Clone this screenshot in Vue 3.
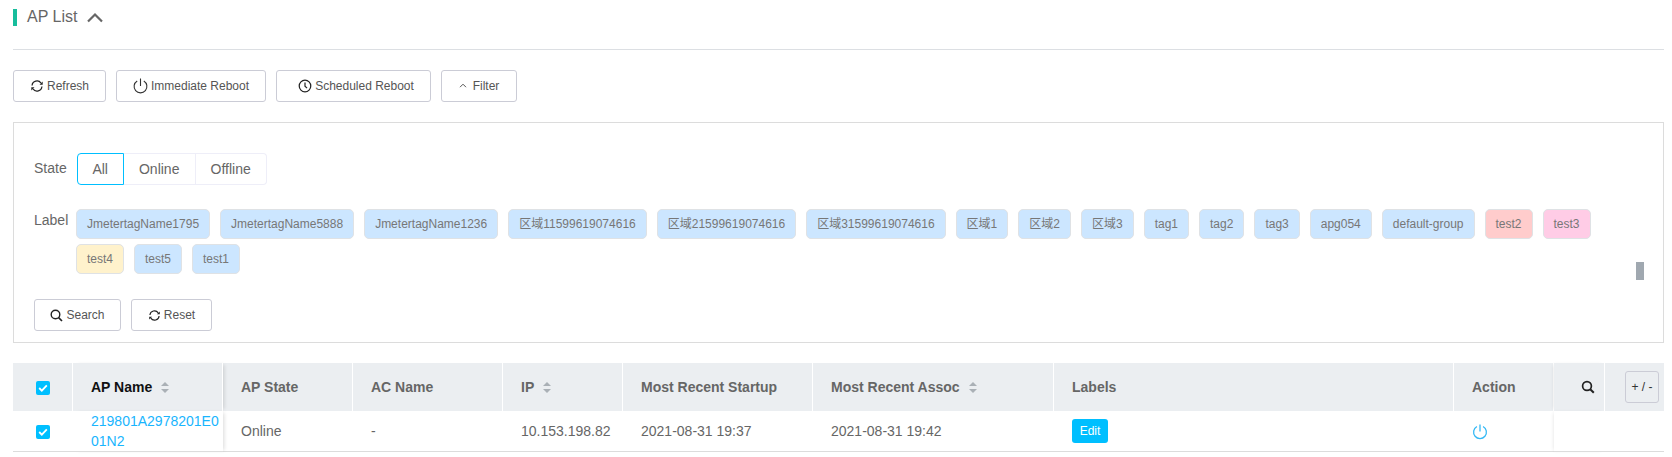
<script setup>
const tags = [
  ['JmetertagName1795', 'blue'], ['JmetertagName5888', 'blue'], ['JmetertagName1236', 'blue'],
  ['区域11599619074616', 'blue'], ['区域21599619074616', 'blue'], ['区域31599619074616', 'blue'],
  ['区域1', 'blue'], ['区域2', 'blue'], ['区域3', 'blue'], ['tag1', 'blue'], ['tag2', 'blue'], ['tag3', 'blue'],
  ['apg054', 'blue'], ['default-group', 'blue'], ['test2', 'red'], ['test3', 'pink'], ['test4', 'yellow'],
  ['test5', 'blue'], ['test1', 'blue']
]
</script>

<template>
  <div class="page">
    <div class="title">
      <span class="bar"></span>
      <span class="title-text">AP List</span>
      <svg class="chev" width="18" height="11" viewBox="0 0 18 11"><path d="M2 9.5 L9 2.5 L16 9.5" fill="none" stroke="#666" stroke-width="2.2"/></svg>
    </div>
    <div class="rule"></div>

    <div class="toolbar">
      <button class="btn w-refresh">
        <svg class="ic" width="14" height="14" viewBox="0 0 15 15"><path d="M2.2 7a5.3 5.3 0 0 1 9.6-2.6M12.8 8a5.3 5.3 0 0 1-9.6 2.6" fill="none" stroke="#222" stroke-width="1.3"/><path d="M13.6 2.8v3.4h-3.4zM1.4 12.2V8.8h3.4z" fill="#222"/></svg>
        Refresh
      </button>
      <button class="btn w-imm">
        <svg class="ic" width="15" height="16" viewBox="0 0 15 16"><path d="M4.2 3a6.4 6.4 0 1 0 6.6 0" fill="none" stroke="#333" stroke-width="1.1"/><path d="M7.5 .5v7.5" stroke="#333" stroke-width="1.1"/></svg>
        Immediate Reboot
      </button>
      <button class="btn w-sch">
        <svg class="ic" width="14" height="14" viewBox="0 0 15 15"><circle cx="7.5" cy="7.5" r="6.2" fill="none" stroke="#222" stroke-width="1.3"/><path d="M7.5 3.8v4l2.2 2" fill="none" stroke="#222" stroke-width="1.3"/></svg>
        Scheduled Reboot
      </button>
      <button class="btn w-fil">
        <svg class="caret" width="8" height="5" viewBox="0 0 8 5"><path d="M1 4.2 L4 1.2 L7 4.2" fill="none" stroke="#555" stroke-width="1"/></svg>
        <span class="fil-text">Filter</span>
      </button>
    </div>

    <div class="filter">
      <div class="state-row">
        <span class="lbl lbl-state">State</span>
        <div class="seg">
          <span class="seg-item seg-all">All</span>
          <span class="seg-item seg-on">Online</span>
          <span class="seg-item seg-off">Offline</span>
        </div>
      </div>
      <div class="label-row">
        <span class="lbl lbl-tags">Label</span>
        <div class="tags">
          <span v-for="t in tags" :key="t[0]" class="tag" :class="t[1]">{{ t[0] }}</span>
        </div>
      </div>
      <div class="filter-actions">
        <button class="btn w-search">
          <svg class="ic" width="13" height="13" viewBox="0 0 13 13"><circle cx="5.5" cy="5.5" r="4.3" fill="none" stroke="#222" stroke-width="1.4"/><path d="M8.6 8.6l3.4 3.4" stroke="#222" stroke-width="1.6"/></svg>
          Search
        </button>
        <button class="btn w-reset">
          <svg class="ic" width="13" height="13" viewBox="0 0 15 15"><path d="M2.2 7a5.3 5.3 0 0 1 9.6-2.6M12.8 8a5.3 5.3 0 0 1-9.6 2.6" fill="none" stroke="#222" stroke-width="1.3"/><path d="M13.6 2.8v3.4h-3.4zM1.4 12.2V8.8h3.4z" fill="#222"/></svg>
          Reset
        </button>
      </div>
      <span class="thumb"></span>
    </div>

    <table class="grid">
      <colgroup>
        <col style="width:60px"><col style="width:150px"><col style="width:130px"><col style="width:150px">
        <col style="width:120px"><col style="width:190px"><col style="width:241px"><col style="width:400px">
        <col style="width:100px"><col style="width:51px"><col style="width:59px">
      </colgroup>
      <thead>
        <tr>
          <th class="center"><span class="check"><svg width="10" height="8" viewBox="0 0 10 8"><path d="M1.2 4l2.6 2.6L8.8 1.4" fill="none" stroke="#fff" stroke-width="1.8"/></svg></span></th>
          <th class="fixed-left dark">AP Name <span class="sort"></span></th>
          <th>AP State</th>
          <th>AC Name</th>
          <th>IP <span class="sort"></span></th>
          <th>Most Recent Startup</th>
          <th>Most Recent Assoc <span class="sort"></span></th>
          <th>Labels</th>
          <th>Action</th>
          <th class="fixed-right th-search">
            <svg width="14" height="14" viewBox="0 0 14 14"><circle cx="6" cy="6" r="4.4" fill="none" stroke="#222" stroke-width="1.7"/><path d="M9.2 9.2l3.6 3.6" stroke="#222" stroke-width="2"/></svg>
          </th>
          <th class="th-plus"><span class="plus">+ / -</span></th>
        </tr>
      </thead>
      <tbody>
        <tr>
          <td class="center"><span class="check"><svg width="10" height="8" viewBox="0 0 10 8"><path d="M1.2 4l2.6 2.6L8.8 1.4" fill="none" stroke="#fff" stroke-width="1.8"/></svg></span></td>
          <td class="fixed-left name"><a class="link">219801A2978201E0<br>01N2</a></td>
          <td>Online</td>
          <td>-</td>
          <td>10.153.198.82</td>
          <td>2021-08-31 19:37</td>
          <td>2021-08-31 19:42</td>
          <td><span class="edit">Edit</span></td>
          <td>
            <svg class="pw" width="16" height="16" viewBox="0 0 15 15"><path d="M4.6 2.4a6 6 0 1 0 5.8 0" fill="none" stroke="#33b8f5" stroke-width="1.2"/><path d="M7.5 .5v6.5" stroke="#33b8f5" stroke-width="1.2"/></svg>
          </td>
          <td class="fixed-right"></td>
          <td></td>
        </tr>
      </tbody>
    </table>
  </div>
</template>

<style>
html, body { margin: 0; background: #fff; }
</style>

<style scoped>
.page {
  width: 1672px;
  height: 457px;
  overflow: hidden;
  box-sizing: border-box;
  padding: 9px 8px 0 13px;
  font-family: "Liberation Sans", "Noto Sans CJK SC", sans-serif;
  color: #666;
}
.title { display: flex; align-items: center; height: 17px; }
.bar { width: 4px; height: 17px; background: #17bd9c; }
.title-text { margin-left: 10px; font-size: 16px; line-height: 16px; color: #666; margin-top: -1px; }
.chev { margin-left: 9px; }
.rule { height: 1px; background: #dcdfe3; margin-top: 23px; }
.toolbar { display: flex; gap: 10px; margin-top: 20px; }
.btn {
  display: inline-flex;
  align-items: center;
  justify-content: center;
  gap: 3px;
  height: 32px;
  box-sizing: border-box;
  padding: 0;
  border: 1px solid #cbccd6;
  border-radius: 3px;
  background: #fff;
  font-family: inherit;
  font-size: 12px;
  color: #555;
}
.w-refresh { width: 93px; }
.w-imm { width: 150px; }
.w-sch { width: 155px; padding-left: 5px; }
.w-fil { width: 76px; gap: 6px; }
.fil-text { margin-top: -1px; }
.w-search { width: 87px; }
.w-reset { width: 81px; }
.caret { margin-top: -1px; }
.filter {
  position: relative;
  box-sizing: border-box;
  height: 221px;
  margin-top: 20px;
  padding: 30px 35px 0 20px;
  border: 1px solid #dcdcdc;
}
.lbl { font-size: 14px; color: #666; line-height: 16px; }
.lbl-state { margin-top: -2px; }
.state-row { display: flex; align-items: center; }
.seg { display: flex; margin-left: 10px; height: 32px; }
.seg-item {
  display: flex;
  align-items: center;
  justify-content: center;
  box-sizing: border-box;
  font-size: 14px;
  color: #666;
  border: 1px solid #eeeef8;
}
.seg-all { width: 47px; border-color: #00bfff; border-radius: 4px 0 0 4px; }
.seg-on { width: 72px; border-left: 0; }
.seg-off { width: 71px; border-left: 0; border-radius: 0 4px 4px 0; }
.label-row { display: flex; margin-top: 24px; }
.lbl-tags { width: 42px; flex: none; margin-top: 3px; }
.tags { display: flex; flex-wrap: wrap; gap: 5px 10px; flex: 1; }
.tag {
  box-sizing: border-box;
  height: 30px;
  line-height: 28px;
  padding: 0 10px;
  border: 1px solid #dfe2e5;
  border-radius: 5px;
  font-size: 12px;
  color: #777;
  white-space: nowrap;
}
.blue { background: #cce6ff; }
.red { background: #ffcccc; }
.pink { background: #ffcce6; }
.yellow { background: #fff2cc; }
.filter-actions { display: flex; gap: 10px; margin-top: 25px; }
.thumb {
  position: absolute;
  left: 1622px;
  top: 139px;
  width: 8px;
  height: 18px;
  background: #a0a8b0;
}
.grid {
  table-layout: fixed;
  width: 1651px;
  margin-top: 20px;
  border-collapse: separate;
  border-spacing: 0;
  font-size: 14px;
  color: #666;
}
th {
  height: 48px;
  padding: 0 0 0 18px;
  box-sizing: border-box;
  background: #ebeef1;
  border-right: 1px solid #fff;
  text-align: left;
  font-weight: 700;
  color: #666;
  white-space: nowrap;
}
td {
  height: 41px;
  padding: 0 0 0 18px;
  box-sizing: border-box;
  background: #fff;
  border-bottom: 1px solid #dcdcdc;
  color: #666;
  white-space: nowrap;
}
th.center, td.center { padding: 0; text-align: center; }
th.dark { color: #111; }
.fixed-left {
  position: relative;
  z-index: 1;
  box-shadow: 3px 0 4px -2px rgba(0, 0, 0, 0.15);
}
.fixed-right {
  position: relative;
  z-index: 1;
  box-shadow: -2px 0 4px -2px rgba(0, 0, 0, 0.12);
}
.name { line-height: 20px; }
.link { color: #19b5fe; display: block; }
.check {
  display: inline-flex;
  align-items: center;
  justify-content: center;
  width: 14px;
  height: 14px;
  border-radius: 2px;
  background: #00bfff;
  vertical-align: middle;
}
.sort {
  display: inline-block;
  position: relative;
  width: 8px;
  height: 11px;
  margin-left: 5px;
  vertical-align: -1px;
}
.sort::before, .sort::after {
  content: "";
  position: absolute;
  left: 0;
  border-left: 4px solid transparent;
  border-right: 4px solid transparent;
}
.sort::before { top: 0; border-bottom: 4px solid #aab0b6; }
.sort::after { bottom: 0; border-top: 4px solid #aab0b6; }
.edit {
  display: inline-block;
  width: 36px;
  height: 24px;
  line-height: 24px;
  text-align: center;
  border-radius: 3px;
  background: #00bfff;
  color: #fff;
  font-size: 12px;
  vertical-align: middle;
}
.pw { vertical-align: middle; }
.th-search { padding: 0 0 0 27px; }
.th-search svg { vertical-align: middle; display: block; }
.th-plus { padding: 0 0 0 20px; border-right: 0; }
.plus {
  display: flex;
  align-items: center;
  justify-content: center;
  box-sizing: border-box;
  width: 34px;
  height: 32px;
  border: 1px solid #cbccd6;
  border-radius: 3px;
  font-size: 12px;
  font-weight: 400;
  color: #333;
}
</style>
